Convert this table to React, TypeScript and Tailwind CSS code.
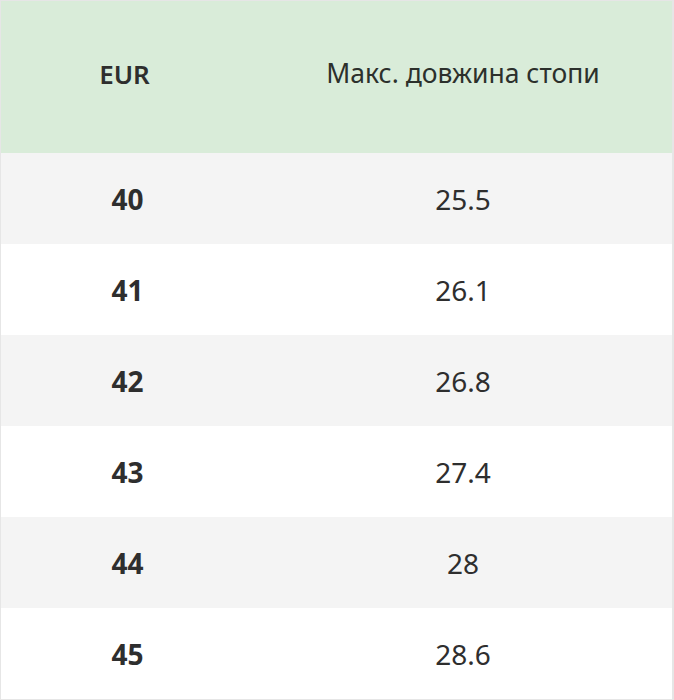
import React from "react";

const rows = [
  ["40", "25.5"],
  ["41", "26.1"],
  ["42", "26.8"],
  ["43", "27.4"],
  ["44", "28"],
  ["45", "28.6"],
];

export default function App() {
  return (
    <div
      className="w-[674px] h-[700px] bg-white border-t border-l border-b border-r-2 border-[#e6e6e6] text-[#2e2e2e]"
      style={{ fontFamily: '"Noto Sans", "Open Sans", sans-serif' }}
    >
      <div className="grid grid-cols-[253px_1fr] h-[152px] bg-[#d9ecd9] items-center pb-[6px]">
        <div className="text-center text-[26px] font-semibold pr-[6px]">EUR</div>
        <div className="text-center text-[26.5px] text-[#2c302c]">Макс. довжина стопи</div>
      </div>
      {rows.map(([a, b], i) => (
        <div
          key={a}
          className={`grid grid-cols-[253px_1fr] h-[91px] items-center ${i % 2 === 0 ? "bg-[#f4f4f4]" : "bg-white"}`}
        >
          <div className="text-center text-[28px] font-bold">{a}</div>
          <div className="text-center text-[28px]">{b}</div>
        </div>
      ))}
    </div>
  );
}
